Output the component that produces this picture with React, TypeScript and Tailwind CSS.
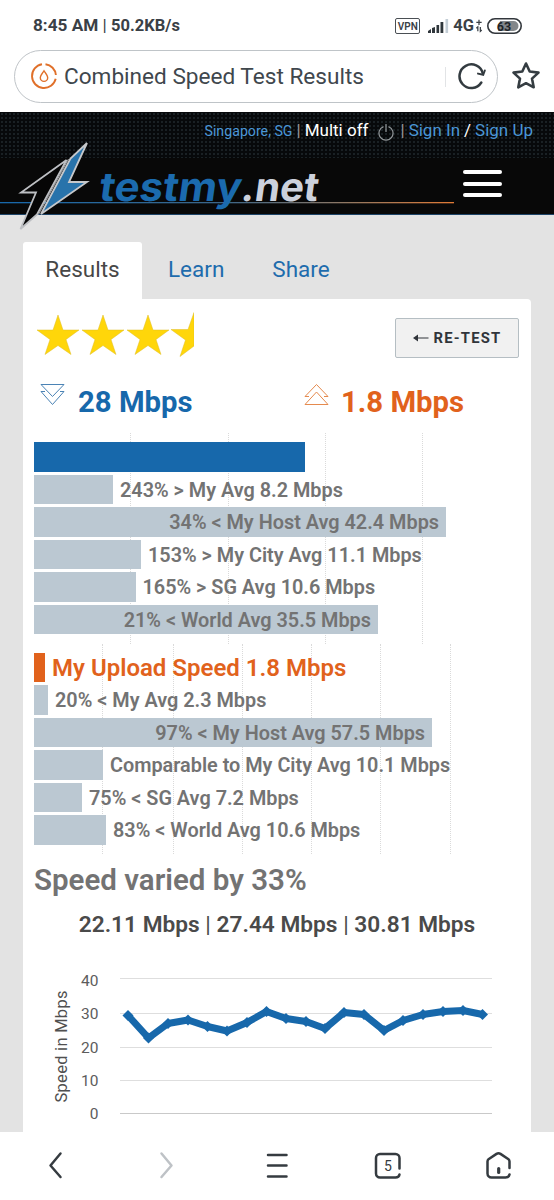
interface BarRow {
  label: string;
  width: number;
  inside?: boolean;
}

interface BarChartProps {
  rows: BarRow[];
  gridLines: number[];
  accent: string;
  headline?: string;
}

const downloadRows: BarRow[] = [
  { label: "243% > My Avg 8.2 Mbps", width: 79 },
  { label: "34% < My Host Avg 42.4 Mbps", width: 412, inside: true },
  { label: "153% > My City Avg 11.1 Mbps", width: 107 },
  { label: "165% > SG Avg 10.6 Mbps", width: 101.5 },
  { label: "21% < World Avg 35.5 Mbps", width: 344, inside: true },
];

const uploadRows: BarRow[] = [
  { label: "20% < My Avg 2.3 Mbps", width: 14 },
  { label: "97% < My Host Avg 57.5 Mbps", width: 398, inside: true },
  { label: "Comparable to My City Avg 10.1 Mbps", width: 69 },
  { label: "75% < SG Avg 7.2 Mbps", width: 48 },
  { label: "83% < World Avg 10.6 Mbps", width: 72 },
];

const points = [
  [128, 71.5], [148.5, 94], [168, 79.5], [188, 76], [207.5, 82.5], [227, 87], [247, 78.5],
  [266.5, 67.5], [286, 74.5], [306, 77.5], [325, 84.5], [344, 68.5], [364, 70.5], [384, 86.5],
  [403, 76.5], [423, 70.5], [443, 67.5], [463, 66.5], [482.5, 70.5],
];

function StatusBar() {
  return (
    <div className="flex h-[50px] items-center justify-between pl-[33px] pr-[32px] pt-[2px] text-[#3a4046]">
      <div className="whitespace-pre text-[17.2px] font-bold">
        8:45 AM <span className="font-normal">|</span> <span className="text-[16.5px]">50.2KB/s</span>
      </div>
      <div className="flex items-center">
        <div className="mr-[8px] flex h-[16px] w-[25px] items-center justify-center rounded-[2px] border-[1.5px] border-[#4a4f54] text-[10px] font-semibold">VPN</div>
        <svg width="22" height="16" viewBox="0 0 22 16" fill="#2f363b">
          <path d="M0 15v-2l3-2v4zM4 15v-5l3-1v6z" />
          <rect x="8.5" y="7" width="2.6" height="8" />
          <rect x="12.5" y="4" width="2.8" height="11" />
          <rect x="17.5" y="1" width="2.6" height="14" fill="#c3cdd5" />
        </svg>
        <span className="ml-[3px] text-[16.5px] font-bold">4G</span>
        <svg className="ml-[1px]" width="8" height="16" viewBox="0 0 9 16" fill="none" stroke="#3a4046" strokeWidth="1.4">
          <path d="M1.5 4h6M4.5 1v6M3.2 14V9L1.5 10.5M6 9v5l1.6-1.5" />
        </svg>
        <svg className="ml-[4px]" width="35" height="16" viewBox="0 0 35 16">
          <rect x="0.8" y="0.8" width="33.4" height="14.4" rx="7.2" fill="#fff" stroke="#32373c" strokeWidth="1.6" />
          <path d="M13 3h13.5a5 5 0 0 1 0 10H11z" fill="#83878a" />
          <text x="17" y="12.5" textAnchor="middle" fontSize="12.5" fontWeight="700" fill="#202428">63</text>
        </svg>
      </div>
    </div>
  );
}

function AddressBar() {
  return (
    <div className="flex h-[62px] items-start pl-[14px]">
      <div className="flex h-[53px] w-[484px] items-center rounded-full border-[1.5px] border-[#bfc4c8] pl-[15px] pr-[10px]">
        <svg className="-mt-[2px]" width="28" height="28" viewBox="0 0 28 28" fill="none" stroke="#e0702a" strokeWidth="1.9">
          <path d="M15.5 2.2A12 12 0 0 1 25.9 13M25.7 16.8A12 12 0 1 1 12 2.2" />
          <path d="M14 8.8c-2 3-3.7 5-3.7 6.9a3.7 3.7 0 0 0 7.4 0c0-1.9-1.7-3.9-3.7-6.9z" strokeWidth="1.4" />
        </svg>
        <span className="ml-[6px] flex-1 whitespace-nowrap pt-px text-[22.6px] text-[#40474d]">Combined Speed Test Results</span>
        <div className="mr-[11px] h-[20px] w-px bg-[#e2e4e6]" />
        <svg width="30" height="30" viewBox="0 0 30 30" fill="none" stroke="#333b40" strokeWidth="2.5" strokeLinecap="round">
          <path d="M24.3 20.5A11.8 11.8 0 1 1 25.8 11.5" />
          <path d="M21 11.6l5.200 1.200 1.600-4.300" strokeWidth="2" />
        </svg>
      </div>
      <svg className="ml-[13px] mt-[11px]" width="30" height="30" viewBox="0 0 30 30" fill="none" stroke="#353d42" strokeWidth="2.6" strokeLinejoin="round">
        <path d="M15 2.5l3.7 8 8.8 1.1-6.5 6 1.7 8.7-7.7-4.1-7.7 4.1 1.7-8.7-6.5-6 8.8-1.1z" />
      </svg>
    </div>
  );
}

function SiteHeader() {
  return (
    <header className="relative h-[103px] border-b border-[#1d4468] bg-[#080808]">
      <div className="flex h-[46px] items-start justify-end bg-[#07090b] bg-[radial-gradient(#1b2226_0.7px,transparent_0.9px)] bg-[size:4px_4px] pr-[21px] pt-[6px] text-[17px] leading-[24px] text-white">
        <span className="pt-px text-[14.2px] text-[#4a96d6]">Singapore, SG</span>
        <span className="mx-[4px] text-[#9a9a9a]">|</span>
        <span>Multi off</span>
        <svg className="ml-[10px] mt-[5px]" width="16" height="18" viewBox="1 0 16 18" fill="none" stroke="#92979a" strokeWidth="1.2">
          <path d="M6.5 3.6A7 7 0 1 0 11.5 3.6M9 1v8" />
        </svg>
        <span className="ml-[6px] mr-[4px] text-[#9a9a9a]">|</span>
        <span className="text-[#4a96d6]">Sign In</span>
        <span className="mx-[4px]">/</span>
        <span className="text-[#4a96d6]">Sign Up</span>
      </div>
      <svg className="absolute left-0 top-0 z-10" width="554" height="125" viewBox="0 0 554 125">
        <defs>
          <linearGradient id="rule" x1="0" x2="1">
            <stop offset="0" stopColor="#1768ab" />
            <stop offset="0.5" stopColor="#3d6687" />
            <stop offset="0.75" stopColor="#8c7765" />
            <stop offset="1" stopColor="#e07a35" />
          </linearGradient>
        </defs>
        <rect x="0" y="90" width="454" height="1.3" fill="url(#rule)" />
        <path d="M66.500 48L21 80.500H36L20.500 117 37 102.500z" fill="#060606" stroke="#bdbfc3" strokeWidth="1.8" />
        <path d="M87 31L69 70h18L41 102 70.500 46.500z" fill="#2873ab" stroke="#c6c8cb" strokeWidth="1.8" />
        <path d="M68.500 47L38.500 102.500" stroke="#c6c8cb" strokeWidth="0.8" />
        <g transform="translate(0 88.500) skewX(-8)" fontFamily="Inter, sans-serif" fontSize="40" fontWeight="700">
          <text x="98" y="0" textLength="142" lengthAdjust="spacingAndGlyphs" fill="#1b6bae">testmy</text>
          <text x="240" y="0" textLength="77" lengthAdjust="spacingAndGlyphs" fill="#ccd1dc">.net</text>
        </g>
      </svg>
      <div className="ml-[463px] mt-[12px] flex w-[39px] flex-col gap-[7.5px]">
        <div className="h-[4px] rounded-sm bg-white" />
        <div className="h-[4px] rounded-sm bg-white" />
        <div className="h-[4px] rounded-sm bg-white" />
      </div>
    </header>
  );
}

function Stars() {
  return (
    <svg className="-mt-[6px]" width="160" height="48" viewBox="0 0 160 48" fill="#ffd60a" stroke="#dfbc25" strokeWidth="0.5">
      {[0, 45, 90].map((x) => (
        <path key={x} transform={`translate(${x} 0)`} d="M24 4l5 15h16L32 28.5l5 15L24 34.5l-13 9 5-15L3 19h16z" />
      ))}
      <path d="M160 1.5V35l-14 10.5 5.5-16.5L137 18.5h17z" />
    </svg>
  );
}

function BarChart({ rows, gridLines, accent, headline }: BarChartProps) {
  return (
    <div className="relative h-[210.5px] pl-[11px] pt-[9px]">
      {gridLines.map((x) => (
        <div key={x} className="absolute inset-y-0 border-l border-dotted border-[#dadada]" style={{ left: x }} />
      ))}
      <div className="relative flex flex-col gap-[3px]">
        <div className="flex h-[29.6px] items-center whitespace-nowrap">
          <div className={`h-full ${accent}`} />
          {headline && <span className="ml-[7px] pt-[2px] text-[24px] font-semibold text-[#e1621c]">{headline}</span>}
        </div>
        {rows.map((row) => (
          <div key={row.label} className="flex h-[29.5px] items-center whitespace-nowrap text-[19.85px] font-semibold text-[#737373]">
            <div className="flex h-full items-center justify-end bg-[#bbc8d2] pr-[7px] pt-[3px]" style={{ width: row.width }}>
              {row.inside && row.label}
            </div>
            {!row.inside && <span className="ml-[7px] pt-[3px]">{row.label}</span>}
          </div>
        ))}
      </div>
    </div>
  );
}

function SpeedChart() {
  return (
    <svg className="block" width="508" height="188" viewBox="23 0 508 188">
      {[34.5, 69.5, 103.5, 136.5, 169.5].map((y, i) => (
        <g key={y}>
          <path d={`M120 ${y}H492`} stroke={i === 4 ? "#c9c9c9" : "#dedede"} />
          <text x="98.5" y={i === 0 ? 42 : y + 5.5} textAnchor="end" fontSize="15.5" fill="#5c5c5c">{40 - i * 10}</text>
        </g>
      ))}
      <text transform="translate(67 158.5) rotate(-90)" fontSize="16.5" textLength="112" fill="#505050">Speed in Mbps</text>
      <polyline points={points.map((p) => p.join(",")).join(" ")} fill="none" stroke="#1768ab" strokeWidth="7" strokeLinejoin="round" />
      {points.map(([x, y]) => (
        <path key={x} d={`M${x - 5.5} ${y}l5.5-5.5 5.5 5.5-5.5 5.5z`} fill="#1768ab" />
      ))}
    </svg>
  );
}

function BottomNav() {
  return (
    <nav className="flex h-[68px] items-center bg-white">
      <svg width="554" height="68" viewBox="0 0 554 68" fill="none" stroke="#353b40" strokeWidth="2.5" strokeLinecap="round" strokeLinejoin="round">
        <path d="M60.5 21.5L50.5 33.500l10 11.500" />
        <path d="M161.5 21.5l10 12-10 11.500" stroke="#bec2c6" />
        <path d="M268 23h18.5M268 33.5h18.5M268 44.5h18.5" />
        <path d="M399.5 36.5V26a4 4 0 0 0-4-4h-15.5a4 4 0 0 0-4 4v15.5a4 4 0 0 0 4 4h15.5q3.5 0 4-3" />
        <path d="M509.5 36v-6.5q0-1.5-1-2.3l-8-5.3q-2-1.2-4 0l-8 5.3q-1 .8-1 2.3v12a4 4 0 0 0 4 4h14q3.5 0 4-3" />
        <path d="M498.7 36.5v4" strokeWidth="3.2" />
        <text x="388" y="38.8" textAnchor="middle" fontSize="14" fill="#353b40" stroke="none">5</text>
      </svg>
    </nav>
  );
}

export default function App() {
  return (
    <div className="flex h-[1200px] w-[554px] flex-col overflow-hidden bg-white font-['Roboto',sans-serif]">
      <StatusBar />
      <AddressBar />
      <SiteHeader />
      <main className="h-[917px] bg-[#e3e3e3] pl-[23px] pt-[27px]">
        <div className="flex h-[57px] items-center text-[22.5px] text-[#1e6cad]">
          <div className="flex h-full w-[119px] items-center justify-center rounded-t-[3px] bg-white pb-[2px] text-[#474747]">Results</div>
          <span className="ml-[26px] pb-[2px]">Learn</span>
          <span className="ml-[48px] pb-[2px]">Share</span>
        </div>
        <div className="h-[833px] w-[508px] rounded-tr-[4px] bg-white">
          <div className="flex h-[78px] items-center justify-between pl-[11px] pr-[12px]">
            <Stars />
            <button className="flex h-[40px] w-[124px] items-center justify-center rounded-[2px] border border-[#b5bec3] bg-[#f1f1f1] text-[14.8px] font-bold tracking-[1.2px] text-[#30343a]">
              <svg className="mr-[5px]" width="16" height="10" viewBox="0 0 16 10" fill="#30343a">
                <path d="M0 5l5-3.5v3h10.5v1H5v3z" />
              </svg>
              RE-TEST
            </button>
          </div>
          <div className="flex h-[56px] items-start pl-[17px] text-[29.3px] font-bold leading-[50px]">
            <svg className="mt-[6px]" width="26" height="24" viewBox="0 0 26 24" fill="none" stroke="#4b83b5">
              <path d="M1 1.5h23L12.5 13.5zM5 8.5H1L12.5 21.5 24 8.5h-4" />
            </svg>
            <span className="ml-[12px] w-[226px] text-[#1768ab]">28 Mbps</span>
            <svg className="mt-[6px]" width="26" height="24" viewBox="0 0 26 24" fill="none" stroke="#e58a4e">
              <path d="M1 21.5h23L12.5 9zM5 13.5H1L12.5 1.5 24 13.5h-4" />
            </svg>
            <span className="ml-[11px] text-[#e1621c]">1.8 Mbps</span>
          </div>
          <BarChart rows={downloadRows} gridLines={[107, 205, 302, 399]} accent="w-[271px] bg-[#1768ab]" />
          <BarChart rows={uploadRows} gridLines={[79, 150, 219, 288, 357, 427]} accent="w-[11px] bg-[#e1621c]" headline="My Upload Speed 1.8 Mbps" />
          <h2 className="h-[52px] pl-[11px] text-[29.5px] font-semibold leading-[53px] text-[#737373]">Speed varied by 33%</h2>
          <p className="h-[38px] text-center text-[22.7px] font-semibold leading-[38px] text-[#4a4a4a]">
            22.11 Mbps <span className="font-normal">|</span> 27.44 Mbps <span className="font-normal">|</span> 30.81 Mbps
          </p>
          <SpeedChart />
        </div>
      </main>
      <BottomNav />
    </div>
  );
}
